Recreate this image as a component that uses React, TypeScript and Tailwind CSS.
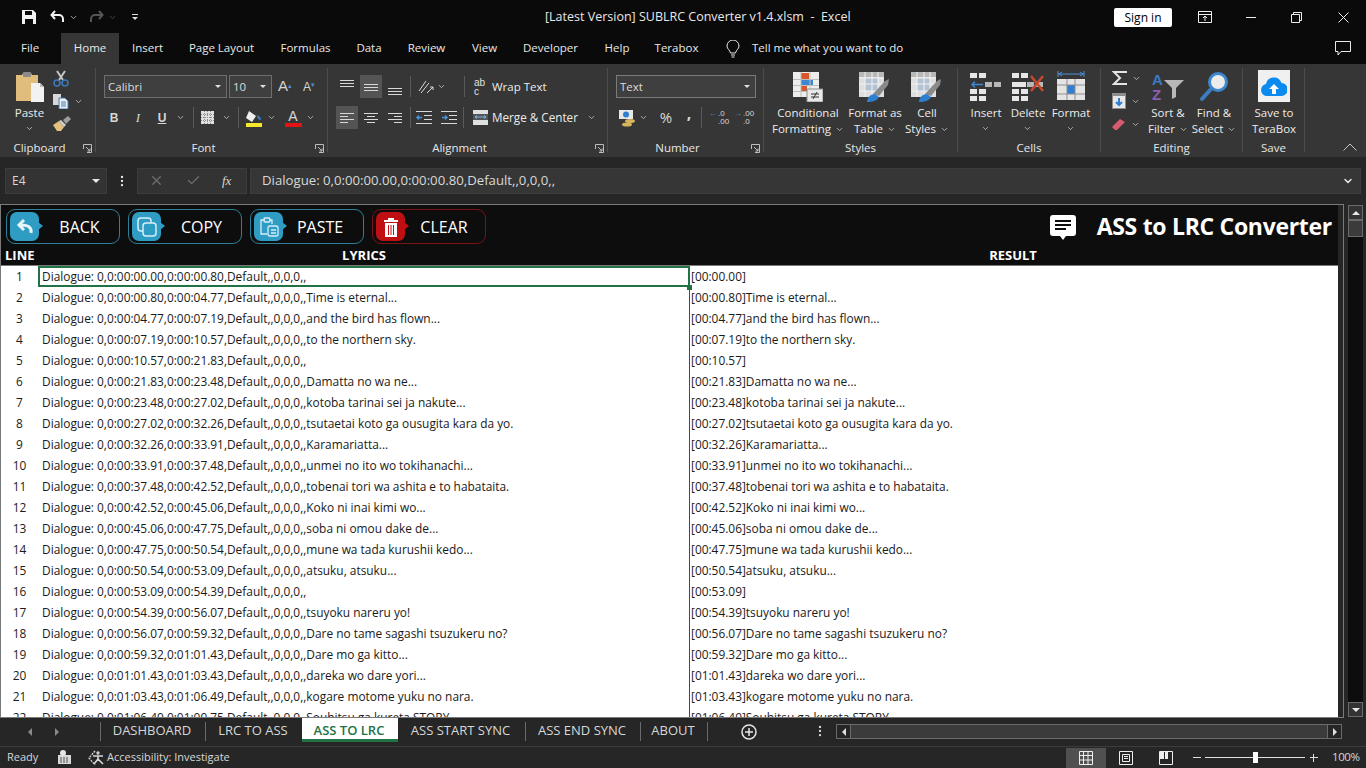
import type { ReactNode } from "react";
import { ChevronDown, MoreVertical, X, Check } from "lucide-react";

const SEGOE = "font-['Open_Sans',sans-serif]";

const ROWS: [string, string, string, string][] = [
  ["0:00:00.00", "0:00:00.80", "", "00:00.00"],
  ["0:00:00.80", "0:00:04.77", "Time is eternal...", "00:00.80"],
  ["0:00:04.77", "0:00:07.19", "and the bird has flown...", "00:04.77"],
  ["0:00:07.19", "0:00:10.57", "to the northern sky.", "00:07.19"],
  ["0:00:10.57", "0:00:21.83", "", "00:10.57"],
  ["0:00:21.83", "0:00:23.48", "Damatta no wa ne...", "00:21.83"],
  ["0:00:23.48", "0:00:27.02", "kotoba tarinai sei ja nakute...", "00:23.48"],
  ["0:00:27.02", "0:00:32.26", "tsutaetai koto ga ousugita kara da yo.", "00:27.02"],
  ["0:00:32.26", "0:00:33.91", "Karamariatta...", "00:32.26"],
  ["0:00:33.91", "0:00:37.48", "unmei no ito wo tokihanachi...", "00:33.91"],
  ["0:00:37.48", "0:00:42.52", "tobenai tori wa ashita e to habataita.", "00:37.48"],
  ["0:00:42.52", "0:00:45.06", "Koko ni inai kimi wo...", "00:42.52"],
  ["0:00:45.06", "0:00:47.75", "soba ni omou dake de...", "00:45.06"],
  ["0:00:47.75", "0:00:50.54", "mune wa tada kurushii kedo...", "00:47.75"],
  ["0:00:50.54", "0:00:53.09", "atsuku, atsuku...", "00:50.54"],
  ["0:00:53.09", "0:00:54.39", "", "00:53.09"],
  ["0:00:54.39", "0:00:56.07", "tsuyoku nareru yo!", "00:54.39"],
  ["0:00:56.07", "0:00:59.32", "Dare no tame sagashi tsuzukeru no?", "00:56.07"],
  ["0:00:59.32", "0:01:01.43", "Dare mo ga kitto...", "00:59.32"],
  ["0:01:01.43", "0:01:03.43", "dareka wo dare yori...", "01:01.43"],
  ["0:01:03.43", "0:01:06.49", "kogare motome yuku no nara.", "01:03.43"],
  ["0:01:06.49", "0:01:09.75", "Souhitsu ga kureta STORY", "01:06.49"],
];

const Chev = ({ className = "" }: { className?: string }) => (
  <ChevronDown size={9} strokeWidth={2} className={"shrink-0 text-[#d0d0d0] " + className} />
);

const Caret = () => <div className="w-0 h-0 border-x-[3px] border-x-transparent border-t-[3px] border-t-[#e0e0e0]" />;

const Sep = ({ className = "" }: { className?: string }) => <div className={"w-px h-[21px] shrink-0 bg-[#5a5a5a] " + className} />;

function Launcher() {
  return (
    <svg width="9" height="9" viewBox="0 0 9 9" fill="none" stroke="#bdbdbd">
      <path d="M.5 5V.5H8.5V8.5H4M3 3l4 4M7 4.5V7H4.5" />
    </svg>
  );
}

function Group({ w, label, labelClass = "", launcher, children }: { w: string; label: string; labelClass?: string; launcher?: boolean; children: ReactNode }) {
  return (
    <div className={"flex flex-col shrink-0 border-r border-[#4c4c4c] h-[84px] " + w}>
      <div className="h-[71px] shrink-0 flex">{children}</div>
      <div className={"relative h-[13px] text-center text-[11.5px] leading-[17px] text-[#e6e6e6] " + labelClass}>
        {label}
        {launcher && <span className="absolute right-[3px] top-[5px]"><Launcher /></span>}
      </div>
    </div>
  );
}

function Big({ icon, lines, w, chevInline, chevBelow }: { icon: ReactNode; lines: string[]; w: string; chevInline?: boolean; chevBelow?: boolean }) {
  return (
    <div className={"flex flex-col items-center shrink-0 " + w}>
      <div className="h-[34px] shrink-0 flex items-end">{icon}</div>
      <div className="text-[11.5px] leading-[16px] text-[#ececec] whitespace-nowrap mt-[3px] text-center">
        {lines.map((l, i) => (
          <div key={l} className="flex items-center justify-center gap-[4px]">
            {l}
            {chevInline && i === lines.length - 1 && <Chev />}
          </div>
        ))}
        {chevBelow && <div className="flex justify-center pt-[3px]"><Chev /></div>}
      </div>
    </div>
  );
}

function Lines({ ys, x1 = [2, 2, 2], x2 = [16, 16, 16], c = "#d8d8d8" }: { ys: number[]; x1?: number[]; x2?: number[]; c?: string }) {
  return (
    <svg width="18" height="18" viewBox="0 0 18 18" stroke={c} fill="none">
      {ys.map((y, i) => <path key={y} d={`M${x1[i] ?? 2} ${y}.5H${x2[i] ?? 16}`} />)}
    </svg>
  );
}

function PasteIcon() {
  return (
    <svg width="30" height="32" viewBox="0 0 30 32">
      <path d="M1 5h6l1-2h8l1 2h6v26H1z" fill="#e0bd7c" />
      <rect x="8" y="2" width="8" height="5" rx="1" fill="#8a8a8a" />
      <path d="M16 13h9l4 4v15H16z" fill="#f2f2f2" />
      <path d="M25 13v4h4" fill="#bbb" />
    </svg>
  );
}

function CutIcon() {
  return (
    <svg width="16" height="17" viewBox="0 0 16 17" fill="none">
      <path d="M4 1l6 9M12 1L6 10" stroke="#c6c6c6" strokeWidth="2" />
      <circle cx="4" cy="13" r="3" stroke="#3d79b8" strokeWidth="1.6" />
      <circle cx="12" cy="13" r="3" stroke="#3d79b8" strokeWidth="1.6" />
    </svg>
  );
}

function CopyIcon() {
  return (
    <svg width="16" height="15" viewBox="0 0 16 15">
      <path d="M0 0h8v11H0z" fill="#d8d8d8" />
      <path d="M6 4h6l3 3v8H6z" fill="#f0f0f0" stroke="#3d79b8" />
      <path d="M8 8h5M8 10h5M8 12h5" stroke="#3d79b8" />
    </svg>
  );
}

function BrushIcon() {
  return (
    <svg width="18" height="15" viewBox="0 0 18 15">
      <path d="M0 9l6-4 5 6-3 4H4z" fill="#e3c07d" />
      <path d="M6 5l5 6 2-2-5-5z" fill="#cfcfcf" />
      <path d="M10 4l5-4 3 3-5 5z" fill="#9d9d9d" />
    </svg>
  );
}

function FillIcon() {
  return (
    <svg width="18" height="19" viewBox="0 0 18 19">
      <path d="M4 3l7 5-4 6-6-4z" fill="#efefef" />
      <path d="M12 7c3 1 4 3 4 5-2 0-4-1-4-5z" fill="#3d79b8" />
      <rect x="1" y="15" width="16" height="4" fill="#f5e92c" />
    </svg>
  );
}

function GridMini() {
  return (
    <svg width="13" height="13" viewBox="0 0 13 13">
      <rect width="13" height="13" fill="#e0e0e0" />
      <path d="M0 3.5h13M0 6.5h13M0 9.5h13M3.5 0v13M6.5 0v13M9.5 0v13" stroke="#8d8d8d" strokeDasharray="1 1" />
    </svg>
  );
}

function ConditionalIcon() {
  return (
    <svg width="30" height="30" viewBox="0 0 30 30">
      <rect width="26" height="25" fill="#ededed" />
      <rect x="8" y="1" width="8" height="6" fill="#d9562b" />
      <rect x="8" y="8" width="12" height="5" fill="#3d87cf" />
      <rect x="8" y="14" width="6" height="5" fill="#d9562b" />
      <path d="M0 7.5h26M0 13.5h26M0 19.5h26M8 0v25M17 0v25" stroke="#bdbdbd" />
      <rect x="14" y="17" width="16" height="13" fill="#e9e9e9" stroke="#8d8d8d" />
      <path d="M18 22h8M18 25h8M24 20l-4 7" stroke="#333" fill="none" />
    </svg>
  );
}

function FormatTableIcon() {
  return (
    <svg width="32" height="30" viewBox="0 0 32 30">
      <rect width="25" height="25" fill="#dedede" />
      <rect x="0" y="0" width="25" height="5" fill="#b8b8b8" />
      <rect x="6" y="6" width="13" height="13" fill="#b4c3d4" />
      <path d="M0 6h25M0 12h25M0 19h25M6 0v25M13 0v25M19 0v25" stroke="#f2f2f2" />
      <path d="M14 22l12-13 4-2-1 6-9 11z" fill="#8a8a8a" />
      <path d="M8 30c0-5 4-8 8-8l4 3c-1 3-6 5-12 5z" fill="#2f7fd0" />
    </svg>
  );
}

function InsertCellsIcon({ del }: { del?: boolean }) {
  return (
    <svg width="34" height="30" viewBox="0 0 34 30">
      <path d="M1 1h7v5H1zM10 1h7v5h-7zM1 17h7v5H1zM10 17h7v5h-7zM1 24h7v5H1zM10 24h7v5h-7z" fill="#e6e6e6" />
      <path d="M16 10h7v5h-7zM25 10h7v5h-7z" fill="#b8b8b8" />
      {del ? (
        <>
          <path d="M1 10h14v5H1z" fill="#e6e6e6" />
          <path d="M20 4l12 15M32 4L20 19" stroke="#c9492c" strokeWidth="2.5" />
        </>
      ) : (
        <path d="M14 12.5H3M6 9.5l-3 3 3 3" stroke="#3d87cf" strokeWidth="1.5" fill="none" />
      )}
    </svg>
  );
}

function FormatCellsIcon() {
  return (
    <svg width="30" height="32" viewBox="0 0 30 32">
      <path d="M2 4h26M2 1v6M28 1v6M6 2L3 4l3 2M24 2l3 2-3 2" stroke="#4a90d9" fill="none" />
      <rect x="1" y="9" width="28" height="21" fill="#e4e4e4" />
      <rect x="11" y="15" width="8" height="9" fill="#2f7fd0" />
      <path d="M1 15h28M1 24h28M11 9v21M19 9v21" stroke="#8d8d8d" />
    </svg>
  );
}

function SortIcon() {
  return (
    <svg width="32" height="31" viewBox="0 0 32 31" fontFamily="Liberation Sans" fontWeight="700">
      <text x="0" y="14" fontSize="15" fill="#3d79c4">A</text>
      <text x="0" y="29" fontSize="15" fill="#8a5fb8">Z</text>
      <path d="M12 9h20l-8 8v9l-4 2V17z" fill="#b8b8b8" />
    </svg>
  );
}

function FindIcon() {
  return (
    <svg width="30" height="31" viewBox="0 0 30 31" fill="none">
      <circle cx="19" cy="11" r="8.5" fill="#ececec" stroke="#3d87cf" strokeWidth="3" />
      <path d="M12 18L3 28" stroke="#3d7cc0" strokeWidth="4" strokeLinecap="round" />
    </svg>
  );
}

function TeraBoxIcon() {
  return (
    <div className="w-[32px] h-[32px] bg-[#f0f0f0] flex items-center justify-center">
      <svg width="26" height="20" viewBox="0 0 26 20">
        <path d="M6 20a6 6 0 0 1-1-11.9A8 8 0 0 1 20.5 7 6.5 6.5 0 0 1 20 20z" fill="#0b8bf0" />
        <path d="M13 8l5 5h-3v5h-4v-5H8z" fill="#fff" />
      </svg>
    </div>
  );
}

function Ribbon() {
  return (
    <div className="h-[93px] bg-[#363636] flex items-start pt-[4px] shrink-0">
      <Group w="w-[96px]" label="Clipboard" labelClass="pr-[16px]" launcher>
        <div className="w-[53px] flex flex-col items-center pt-[2px] pl-[6px]">
          <PasteIcon />
          <div className="text-[11.5px] leading-[16px] text-[#ececec] mt-[3px]">Paste</div>
          <Chev className="mt-[3px]" />
        </div>
        <div className="flex flex-col pt-[2px] gap-[7px]">
          <CutIcon />
          <div className="flex items-center gap-[5px]"><CopyIcon /><Chev /></div>
          <BrushIcon />
        </div>
      </Group>
      <Group w="w-[232px]" label="Font" labelClass="pr-[16px]" launcher>
        <div className="pl-[8px] pt-[7px] flex flex-col">
          <div className="flex items-center h-[23px]">
            <div className="w-[123px] h-[23px] border border-[#6e6e6e] bg-[#3f3f3f] flex items-center justify-between px-[3px] pr-[5px] text-[11.5px] text-[#dcdcdc]">Calibri<Caret /></div>
            <div className="ml-[2px] w-[43px] h-[23px] border border-[#6e6e6e] bg-[#3f3f3f] flex items-center justify-between px-[3px] pr-[5px] text-[11.5px] text-[#dcdcdc]">10<Caret /></div>
            <span className="ml-[6px] w-[25px] text-[15px] text-[#d4d4d4] font-['Liberation_Sans',sans-serif]">A<sup className="text-[#4a90d9] text-[7px]">▴</sup></span>
            <span className="w-[20px] text-[12px] text-[#d4d4d4] font-['Liberation_Sans',sans-serif]">A<sup className="text-[#4a90d9] text-[7px]">▾</sup></span>
          </div>
          <div className="flex items-center h-[23px] mt-[8px] text-[#d6d6d6]">
            <span className="w-[20px] text-[12px] font-bold text-center font-['Liberation_Sans',sans-serif]">B</span>
            <span className="w-[28px] text-[13px] italic text-center font-['Liberation_Serif',serif]">I</span>
            <span className="w-[20px] text-[12px] underline font-bold text-center font-['Liberation_Sans',sans-serif]">U</span>
            <Chev className="ml-[4px]" />
            <Sep className="ml-[8px] mr-[7px]" />
            <GridMini />
            <Chev className="ml-[8px]" />
            <Sep className="ml-[7px] mr-[6px]" />
            <FillIcon />
            <Chev className="ml-[4px]" />
            <div className="ml-[8px] w-[18px] flex flex-col items-center">
              <span className="text-[14px] leading-[14px] font-['Liberation_Sans',sans-serif]">A</span>
              <div className="w-[17px] h-[4px] bg-[#e01414]" />
            </div>
            <Chev className="ml-[4px]" />
          </div>
        </div>
      </Group>
      <Group w="w-[280px]" label="Alignment" labelClass="pr-[16px]" launcher>
        <div className="pl-[8px] pt-[7px] flex flex-col">
          <div className="flex items-center h-[23px]">
            <div className="w-[22px] h-[23px] flex items-center justify-center"><Lines ys={[2, 5, 8]} /></div>
            <div className="ml-[2px] w-[22px] h-[23px] bg-[#545454] flex items-center justify-center"><Lines ys={[6, 9, 12]} /></div>
            <div className="ml-[2px] w-[22px] h-[23px] flex items-center justify-center"><Lines ys={[10, 13, 16]} /></div>
            <Sep className="ml-[4px] mr-[6px]" />
            <svg width="18" height="18" viewBox="0 0 18 18" fill="none" stroke="#d8d8d8"><path d="M2 13L9 3M4 15L12 5M10 15l6-6M13 9h3v3" /></svg>
            <Chev className="ml-[2px]" />
            <Sep className="ml-[18px] mr-[9px]" />
            <span className="w-[15px] text-[10px] leading-[9px] text-[#e0e0e0] font-['Liberation_Sans',sans-serif]">ab<br />c</span>
            <span className="ml-[3px] text-[11.5px] text-[#ececec] whitespace-nowrap">Wrap Text</span>
          </div>
          <div className="flex items-center h-[23px] mt-[8px]">
            <div className="w-[22px] h-[23px] bg-[#545454] flex items-center justify-center"><Lines ys={[4, 7, 10, 13]} x2={[16, 10, 16, 10]} /></div>
            <div className="ml-[2px] w-[22px] h-[23px] flex items-center justify-center"><Lines ys={[4, 7, 10, 13]} x1={[2, 5, 2, 5]} x2={[16, 13, 16, 13]} /></div>
            <div className="ml-[2px] w-[22px] h-[23px] flex items-center justify-center"><Lines ys={[4, 7, 10, 13]} x1={[2, 8, 2, 8]} /></div>
            <Sep className="ml-[4px] mr-[4px]" />
            <svg width="18" height="16" viewBox="0 0 18 16" fill="none" stroke="#d8d8d8"><path d="M1 1.5h16M9 5.5h8M9 9.5h8M1 13.5h16" /><path d="M7 7.5H2m2-2-2 2 2 2" stroke="#4a90d9" strokeWidth="1.5" /></svg>
            <svg className="ml-[7px]" width="18" height="16" viewBox="0 0 18 16" fill="none" stroke="#d8d8d8"><path d="M1 1.5h16M9 5.5h8M9 9.5h8M1 13.5h16" /><path d="M2 7.5h5M5 5.5l2 2-2 2" stroke="#4a90d9" strokeWidth="1.5" /></svg>
            <Sep className="ml-[5px] mr-[9px]" />
            <svg width="15" height="15" viewBox="0 0 15 15"><rect width="15" height="15" fill="#e0e0e0" /><rect y="4" width="15" height="6" fill="#555" /><path d="M2 7h11M4 5.5 2 7l2 1.500M11 5.500 13 7l-2 1.500" stroke="#7fb5e8" fill="none" /></svg>
            <span className="ml-[4px] text-[11.7px] text-[#ececec] whitespace-nowrap">Merge &amp; Center</span>
            <Chev className="ml-[9px]" />
          </div>
        </div>
      </Group>
      <Group w="w-[156px]" label="Number" labelClass="pr-[16px]" launcher>
        <div className="pl-[8px] pt-[7px] flex flex-col">
          <div className="w-[140px] h-[23px] border border-[#7a7a7a] bg-[#3f3f3f] flex items-center justify-between px-[3px] pr-[5px] text-[11.5px] text-[#dcdcdc]">Text<Caret /></div>
          <div className="flex items-center h-[23px] mt-[8px] pl-[2px]">
            <svg width="18" height="18" viewBox="0 0 18 18"><rect x="1" y="1" width="14" height="9" fill="#e8e8e8" /><circle cx="8" cy="5.500" r="3" fill="#2f7fd0" /><ellipse cx="12" cy="12" rx="5" ry="2" fill="#d8b45c" /><ellipse cx="9" cy="15.500" rx="5" ry="2" fill="#d8b45c" /></svg>
            <Chev className="ml-[3px]" />
            <span className="ml-[7px] w-[22px] text-[15px] text-[#d8d8d8] text-center">%</span>
            <span className="w-[24px] h-[23px] text-[16px] leading-[14px] font-bold text-[#d8d8d8] text-center">,</span>
            <Sep className="mr-[7px]" />
            <div className="flex w-[25px] text-[8px] leading-[8px] text-[#d8d8d8] font-['Liberation_Sans',sans-serif]"><span className="text-[#4a90d9] pr-[1px]">←</span><span>.0<br />.00</span></div>
            <div className="flex w-[20px] text-[8px] leading-[8px] text-[#d8d8d8] font-['Liberation_Sans',sans-serif]"><span className="text-[#4a90d9] pr-[1px]">→</span><span>.00<br />.0</span></div>
          </div>
        </div>
      </Group>
      <Group w="w-[194px]" label="Styles">
        <Big w="w-[88px]" icon={<ConditionalIcon />} lines={["Conditional", "Formatting"]} chevInline />
        <Big w="w-[46px]" icon={<FormatTableIcon />} lines={["Format as", "Table"]} chevInline />
        <Big w="w-[58px]" icon={<FormatTableIcon />} lines={["Cell", "Styles"]} chevInline />
      </Group>
      <Group w="w-[143px]" label="Cells">
        <Big w="w-[42px] ml-[7px]" icon={<InsertCellsIcon />} lines={["Insert"]} chevBelow />
        <Big w="w-[42px]" icon={<InsertCellsIcon del />} lines={["Delete"]} chevBelow />
        <Big w="w-[44px]" icon={<FormatCellsIcon />} lines={["Format"]} chevBelow />
      </Group>
      <Group w="w-[142px]" label="Editing">
        <div className="w-[44px] pl-[11px] pt-[2px] flex flex-col gap-[7px]">
          <div className="flex items-center gap-[4px] h-[16px]"><svg width="16" height="16" viewBox="0 0 16 16" fill="none" stroke="#e4e4e4" strokeWidth="2"><path d="M15 2H2l6 6-6 6h13" /></svg><Chev /></div>
          <div className="flex items-center gap-[4px] h-[16px]"><svg width="15" height="16" viewBox="0 0 15 16"><rect width="14" height="16" fill="#8d8d8d" /><rect x="1" y="3" width="12" height="12" fill="#e8e8e8" /><path d="M7 5v7M4 9l3 3 3-3" stroke="#2f7fd0" strokeWidth="2" fill="none" /></svg><Chev /></div>
          <div className="flex items-center gap-[4px] h-[16px]"><svg width="15" height="13" viewBox="0 0 15 13"><path d="M0 9l8-8 5 3-8 8H3z" fill="#d65b6c" /></svg><Chev /></div>
        </div>
        <Big w="w-[46px]" icon={<SortIcon />} lines={["Sort &", "Filter"]} chevInline />
        <Big w="w-[46px]" icon={<FindIcon />} lines={["Find &", "Select"]} chevInline />
      </Group>
      <Group w="w-[62px]" label="Save">
        <Big w="w-[60px] ml-[1px]" icon={<TeraBoxIcon />} lines={["Save to", "TeraBox"]} />
      </Group>
      <div className="flex-1 h-[84px] flex justify-end items-end pr-[9px] pb-[1px]">
        <svg width="14" height="8" viewBox="0 0 14 8" fill="none" stroke="#c8c8c8"><path d="M.5 7.500 7 1l6.500 6.500" /></svg>
      </div>
    </div>
  );
}

function ActionButton({ label, icon, red, pad }: { label: string; icon: ReactNode; red?: boolean; pad: string }) {
  return (
    <div className={"w-[114px] h-[35px] shrink-0 rounded-[9px] border flex items-center pl-[3px] " + (red ? "border-[#7a1216]" : "border-[#2f7f99]")}>
      <div className="relative w-[29px] h-[29px] shrink-0">
        <div className={"w-[29px] h-[29px] rounded-[7px] flex items-center justify-center " + (red ? "bg-[#c00f12]" : "bg-[#2f9cc4]")}>{icon}</div>
        <div className={"absolute right-[-4px] top-[10px] w-0 h-0 border-y-[4px] border-y-transparent border-l-[5px] " + (red ? "border-l-[#c00f12]" : "border-l-[#2f9cc4]")} />
      </div>
      <span className={"flex-1 text-center text-[16px] text-white " + pad}>{label}</span>
    </div>
  );
}

function SheetHeader() {
  return (
    <div className="bg-[#0d0d0d] h-[60px] shrink-0 flex flex-col">
      <div className="h-[42px] flex items-center pl-[5px] pr-[6px] pt-[1px] gap-[8px]">
        <ActionButton label="BACK" pad="pl-[1px]" icon={<svg width="20" height="18" viewBox="0 0 20 18" fill="none" stroke="#e6f5fa" strokeWidth="3"><path d="M16 15c1-6-3-8-11-8M9 2 4 7l5 5" /></svg>} />
        <ActionButton label="COPY" pad="pl-[1px]" icon={<svg width="22" height="22" viewBox="0 0 22 22" fill="none" stroke="#d8eef6" strokeWidth="1.500"><rect x="2" y="2" width="13" height="13" rx="3" /><rect x="7" y="7" width="13" height="13" rx="3" fill="#2f9cc4" /></svg>} />
        <ActionButton label="PASTE" pad="pr-[6px]" icon={<svg width="22" height="22" viewBox="0 0 22 22" fill="none" stroke="#d8eef6" strokeWidth="1.300"><path d="M7 4H3v14h6M11 4h3v4" /><rect x="6" y="2" width="6" height="4" rx="1" /><rect x="10" y="10" width="10" height="10" rx="2" /><path d="M13 14h5M13 17h5" /></svg>} />
        <ActionButton red label="CLEAR" pad="pr-[2px]" icon={<svg width="16" height="20" viewBox="0 0 16 20" fill="#fff"><path d="M1 3h14v2H1zM5 1h6v2H5zM2 6h12v14H2z" /><path d="M5.500 8v10M8 8v10M10.500 8v10" stroke="#c00f12" /></svg>} />
        <div className="flex-1" />
        <svg width="28" height="28" viewBox="0 0 28 28" className="mr-[12px]"><path d="M4 2h20a3 3 0 0 1 3 3v15a3 3 0 0 1-3 3h-7l-3 4-3-4H4a3 3 0 0 1-3-3V5a3 3 0 0 1 3-3z" fill="#fff" /><path d="M6 8h16M6 12h16M6 16h11" stroke="#0d0d0d" strokeWidth="2" /></svg>
        <span className="text-[23px] font-bold text-white whitespace-nowrap tracking-[-0.3px]">ASS to LRC Converter</span>
      </div>
      <div className="flex h-[18px] text-[13px] leading-[17px] font-bold text-white">
        <div className="w-[37px] pl-[4px]">LINE</div>
        <div className="w-[652px] text-center">LYRICS</div>
        <div className="w-[646px] text-center">RESULT</div>
      </div>
    </div>
  );
}

function Row({ n, data }: { n: number; data: [string, string, string, string] }) {
  const [start, end, text, stamp] = data;
  return (
    <div className="flex h-[21px] shrink-0 text-[11.9px] leading-[21px] text-[#1a1a1a] whitespace-nowrap">
      <div className="w-[37px] text-center shrink-0">{n}</div>
      <div className={"relative w-[652px] shrink-0 pl-[4px] border-r border-[#5a3a6a] " + (n === 1 ? "outline-2 -outline-offset-2 outline-[#217346]" : "")}>
        {`Dialogue: 0,${start},${end},Default,,0,0,0,,${text}`}
        {n === 1 && <div className="absolute right-[-3px] bottom-[-3px] w-[5px] h-[5px] bg-[#217346] z-10" />}
      </div>
      <div className="pl-[1px]">{`[${stamp}]${text}`}</div>
    </div>
  );
}

function ScrollBtn({ children }: { children: ReactNode }) {
  return <div className="w-[15px] h-[15px] border border-[#6a6a6a] bg-[#333] flex items-center justify-center">{children}</div>;
}

function SheetTabs() {
  const tab = "border-r border-[#6a6a6a] h-[19px] leading-[17px] whitespace-nowrap text-center pr-[2px]";
  return (
    <div className="h-[28px] bg-[#262626] shrink-0 flex items-start pt-[4px] text-[13px] text-[#d8d8d8]">
      <div className="w-[101px] h-[19px] flex items-center border-r border-[#6a6a6a] pl-[28px] gap-[23px]">
        <div className="w-0 h-0 border-y-[4px] border-y-transparent border-r-[4px] border-r-[#8a8a8a]" />
        <div className="w-0 h-0 border-y-[4px] border-y-transparent border-l-[4px] border-l-[#8a8a8a]" />
      </div>
      <div className={tab + " w-[105px]"}>DASHBOARD</div>
      <div className="w-[96px] h-[19px] leading-[17px] text-center whitespace-nowrap pr-[2px]">LRC TO ASS</div>
      <div className="w-[96px] h-[24px] -mt-[4px] bg-white border-b-[3px] border-[#217346] text-[#217346] font-semibold text-center leading-[25px] whitespace-nowrap pr-[2px]">ASS TO LRC</div>
      <div className={tab + " w-[128px]"}>ASS START SYNC</div>
      <div className={tab + " w-[115px]"}>ASS END SYNC</div>
      <div className={tab + " w-[67px]"}>ABOUT</div>
      <div className="w-[82px] h-[19px] flex items-center justify-center">
        <svg width="16" height="16" viewBox="0 0 16 16" fill="none" stroke="#e6e6e6" strokeWidth="1.500"><circle cx="8" cy="8" r="7" /><path d="M8 4v8M4 8h8" /></svg>
      </div>
      <MoreVertical size={14} className="text-[#d8d8d8] ml-[23px] mr-[9px] mt-[2px]" />
      <div className="w-[506px] h-[15px] mt-[2px] border border-[#6a6a6a] bg-[#3b3b3b] flex justify-between">
        <div className="w-[14px] bg-[#262626] border-r border-[#6a6a6a] flex items-center justify-center"><div className="w-0 h-0 border-y-[4px] border-y-transparent border-r-[4px] border-r-[#e0e0e0]" /></div>
        <div className="w-[14px] bg-[#262626] border-l border-[#6a6a6a] flex items-center justify-center"><div className="w-0 h-0 border-y-[4px] border-y-transparent border-l-[4px] border-l-[#e0e0e0]" /></div>
      </div>
    </div>
  );
}

function StatusBar() {
  return (
    <div className="h-[22px] bg-[#262626] border-t border-[#3c3c3c] shrink-0 flex items-center text-[11px] text-[#d8d8d8] pl-[7px]">
      <span className="w-[51px] pb-[1px]">Ready</span>
      <svg width="14" height="15" viewBox="0 0 14 15"><rect y="5" width="13" height="9" fill="#d8d8d8" /><circle cx="5" cy="3" r="3" fill="#e6e6e6" /><path d="M2 8h9M2 10h9M2 12h9" stroke="#555" strokeDasharray="2 1" /></svg>
      <svg className="ml-[16px]" width="19" height="16" viewBox="0 0 19 16" fill="none" stroke="#d8d8d8" strokeWidth="1.300"><path d="M7 1 1 8l6 7" strokeDasharray="2 1" /><circle cx="10" cy="3" r="1" /><path d="M5 6h10M10 6v3l-4 5M10 9l5 5" strokeWidth="1.600" /></svg>
      <span className="pb-[1px]">Accessibility: Investigate</span>
      <div className="flex-1" />
      <div className="w-[40px] h-[20px] bg-[#505050] flex items-center justify-center">
        <svg width="14" height="14" viewBox="0 0 14 14" fill="none" stroke="#eee"><path d="M.5.5h13v13H.5zM.5 4.500h13M.5 9h13M4.500.5v13M9 .5v13" /></svg>
      </div>
      <div className="w-[40px] flex justify-center">
        <svg width="14" height="14" viewBox="0 0 14 14" fill="none" stroke="#eee"><path d="M.5.5h13v13H.5zM3.500 3.500h7v7h-7zM5 5.500h4M5 7.500h4" /></svg>
      </div>
      <div className="w-[40px] flex justify-center">
        <svg width="14" height="14" viewBox="0 0 14 14"><path d="M.5.5h13v13H.5z" fill="none" stroke="#eee" /><path d="M1 1h4v7H1zM6 1h3v7H6z" fill="#eee" /></svg>
      </div>
      <div className="ml-[7px] w-[8px] h-px bg-[#e0e0e0]" />
      <div className="relative ml-[4px] w-[100px] h-px bg-[#e0e0e0]">
        <div className="absolute left-[48px] top-[-5px] w-[5px] h-[11px] bg-white" />
      </div>
      <div className="ml-[5px] relative w-[8px] h-[8px]">
        <div className="absolute top-[3px] w-[8px] h-px bg-[#e0e0e0]" />
        <div className="absolute left-[3px] w-px h-[8px] bg-[#e0e0e0]" />
      </div>
      <span className="ml-[14px] w-[34px] text-[11.5px] tracking-[-0.4px] pb-[1px]">100%</span>
    </div>
  );
}

export default function App() {
  return (
    <div className={"w-[1366px] h-[768px] overflow-hidden flex flex-col bg-[#262626] " + SEGOE}>
      <div className="h-[33px] bg-[#0a0a0a] shrink-0 flex items-center pt-[1px] text-[#e8e8e8]">
        <div className="w-[21px]" />
        <svg width="16" height="16" viewBox="0 0 16 16"><path d="M1 1h11l3 3v11H1z" fill="#f2f2f2" /><path d="M4 2h7v4H4z" fill="#0a0a0a" /><path d="M4 10h8v5H4z" fill="#0a0a0a" /></svg>
        <svg className="ml-[13px]" width="15" height="14" viewBox="0 0 15 14" fill="none" stroke="#f2f2f2" strokeWidth="2"><path d="M5 1 1.500 5 5 9M2 5h7a4 4 0 0 1 4 4v3" /></svg>
        <Chev className="ml-[4px]" />
        <svg className="ml-[11px]" width="15" height="14" viewBox="0 0 15 14" fill="none" stroke="#555" strokeWidth="2"><path d="M10 1l3.500 4L10 9M13 5H6a4 4 0 0 0-4 4v3" /></svg>
        <ChevronDown size={9} className="ml-[4px] text-[#555]" />
        <div className="ml-[15px] flex flex-col items-center gap-[2px]">
          <div className="w-[6px] h-px bg-[#ddd]" /><Caret />
        </div>
        <div className="w-[407px]" />
        <div className="w-[272px] text-center whitespace-nowrap text-[12.5px]">[Latest Version] SUBLRC Converter v1.4.xlsm&nbsp; -&nbsp; Excel</div>
        <div className="w-[297px]" />
        <div className="w-[58px] h-[19px] bg-white rounded-[2px] text-black text-[12px] leading-[19px] text-center">Sign in</div>
        <div className="w-[26px]" />
        <svg width="14" height="12" viewBox="0 0 14 12" fill="none" stroke="#eee"><path d="M.5.5h13v11H.5zM.5 3.500h13M7 10V5M5 7l2-2 2 2" /></svg>
        <div className="w-[34px]" />
        <div className="w-[10px] h-px bg-[#eee]" />
        <div className="w-[35px]" />
        <svg width="11" height="11" viewBox="0 0 11 11" fill="none" stroke="#eee"><path d="M.5 2.500h8v8h-8zM2.500 2.500v-2h8v8h-2" /></svg>
        <div className="w-[36px]" />
        <svg width="11" height="11" viewBox="0 0 11 11" fill="none" stroke="#eee"><path d="M.5.5l10 10M10.500.5l-10 10" /></svg>
      </div>

      <div className="h-[31px] bg-[#0a0a0a] shrink-0 flex items-end text-[11.5px] text-[#e8e8e8]">
        <div className="w-[61px] h-[31px] leading-[30px] pl-[21px]">File</div>
        <div className="w-[58px] h-[31px] leading-[30px] bg-[#363636] text-center">Home</div>
        <div className="flex h-[31px] leading-[30px] whitespace-nowrap">
          <span className="w-[57px] text-center">Insert</span>
          <span className="w-[91px] text-center">Page Layout</span>
          <span className="w-[77px] text-center">Formulas</span>
          <span className="w-[50px] text-center">Data</span>
          <span className="w-[65px] text-center">Review</span>
          <span className="w-[51px] text-center">View</span>
          <span className="w-[81px] text-center">Developer</span>
          <span className="w-[52px] text-center">Help</span>
          <span className="w-[67px] text-center">Terabox</span>
          <span className="w-[42px] flex items-center justify-center pl-[4px]">
            <svg width="14" height="18" viewBox="0 0 14 18" fill="none" stroke="#e8e8e8"><path d="M4.500 13C4 10 1 9 1 6a6 6 0 0 1 12 0c0 3-3 4-3.500 7zM5 15h4M5.500 17h3" /></svg>
          </span>
          <span>Tell me what you want to do</span>
        </div>
        <div className="flex-1 h-[31px] flex items-center justify-end pr-[15px]">
          <svg width="16" height="15" viewBox="0 0 16 15" fill="none" stroke="#e8e8e8"><path d="M.5.5h15v10H6l-3 3.500v-3.500H.5z" /></svg>
        </div>
      </div>

      <Ribbon />

      <div className="h-[47px] bg-[#262626] shrink-0 flex items-center pl-[5px] pr-[5px]">
        <div className="w-[102px] h-[26px] bg-[#333] border border-[#3c3c3c] flex items-center justify-between pl-[6px] pr-[6px] text-[12px] text-[#d8d8d8]">E4<div className="w-0 h-0 border-x-[4px] border-x-transparent border-t-[4px] border-t-[#e8e8e8]" /></div>
        <MoreVertical size={14} className="ml-[8px] text-[#e8e8e8]" />
        <div className="ml-[8px] w-[110px] h-[26px] bg-[#333] border border-[#3c3c3c] flex items-center text-[#6e6e6e]">
          <X size={15} className="ml-[11px]" />
          <Check size={15} className="ml-[22px]" />
          <span className="ml-[21px] text-[13px] italic text-[#d8d8d8] font-['Liberation_Serif',serif]">fx</span>
        </div>
        <div className="ml-[3px] flex-1 h-[26px] bg-[#363636] border border-[#3c3c3c] flex items-center justify-between pl-[11px] pr-[6px] text-[13.2px] text-[#d8d8d8]">
          Dialogue: 0,0:00:00.00,0:00:00.80,Default,,0,0,0,,
          <ChevronDown size={12} strokeWidth={3} className="text-[#e8e8e8]" />
        </div>
      </div>

      <div className="flex h-[514px] shrink-0">
        <div className="w-[1344px] shrink-0 border border-[#7a7a7a] flex overflow-hidden">
          <div className="w-[1337px] shrink-0 flex flex-col overflow-hidden">
            <SheetHeader />
            <div className="flex-1 bg-white border-t border-[#7a7a7a] flex flex-col overflow-hidden">
              {ROWS.map((r, i) => <Row key={r[0]} n={i + 1} data={r} />)}
            </div>
          </div>
          <div className="flex-1 bg-[#262626]" />
        </div>
        <div className="w-[22px] bg-[#262626] pl-[4px] pt-[1px] flex">
          <div className="w-[15px] h-[512px] bg-[#0d0d0d] flex flex-col justify-between">
            <div>
              <ScrollBtn><div className="w-0 h-0 border-x-[4px] border-x-transparent border-b-[4px] border-b-[#e8e8e8]" /></ScrollBtn>
              <div className="w-[15px] h-[17px] bg-[#3b3b3b] border border-[#6a6a6a]" />
            </div>
            <ScrollBtn><div className="w-0 h-0 border-x-[4px] border-x-transparent border-t-[4px] border-t-[#e8e8e8]" /></ScrollBtn>
          </div>
        </div>
      </div>

      <SheetTabs />
      <StatusBar />
    </div>
  );
}
